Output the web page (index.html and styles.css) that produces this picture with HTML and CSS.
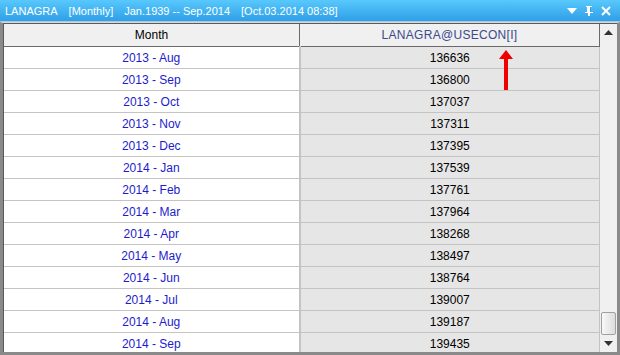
FILE: index.html
```html
<!DOCTYPE html>
<html>

<head>
    <meta charset='UTF-8'>
    <title>LANAGRA</title>
    <link rel="stylesheet" href="styles.css">
</head>

<body>
    <div class='panel'>
        <!-- Title bar -->
        <div class='titlebar'>
            <div class='title-text'>
                <span>LANAGRA</span>
                <span>[Monthly]</span>
                <span>Jan.1939 -- Sep.2014</span>
                <span>[Oct.03.2014 08:38]</span>
            </div>
            <div class='title-buttons'>
                <svg width='12' height='10' viewBox='0 0 12 10'><path d='M1 2h10L6 8z' fill='#fff'/></svg>
                <svg width='12' height='12' viewBox='0 0 12 12'><path d='M3 1h6v1H8v5h2v1H7v3H5V8H2V7h2V2H3z' fill='#fff'/><rect x='7' y='2' width='1' height='5' fill='#2f9fe8'/></svg>
                <svg width='12' height='12' viewBox='0 0 12 12'><path d='M2 2l8 8M10 2l-8 8' stroke='#fff' stroke-width='2'/></svg>
            </div>
        </div>

        <div class='frame'>
            <div class='grid-wrap'>
                <table class='grid'>
                    <thead>
                        <tr>
                            <th class='col-month'>Month</th>
                            <th class='col-value'>LANAGRA@USECON[I]</th>
                        </tr>
                    </thead>
                    <tbody id='rows'></tbody>
                </table>

                <!-- arrow pointing at the series name -->
                <svg class='arrow' width='16' height='42' viewBox='0 0 16 42'>
                    <path d='M8 0L15 9H10V40H6V9H1z' fill='#f20000'/>
                </svg>
            </div>

            <div class='scrollbar'>
                <div class='scroll-btn'>
                    <svg width='9' height='5' viewBox='0 0 9 5'><path d='M4.5 0L9 5H0z' fill='#333'/></svg>
                </div>
                <div class='scroll-track'>
                    <div class='scroll-thumb'></div>
                </div>
                <div class='scroll-btn'>
                    <svg width='9' height='5' viewBox='0 0 9 5'><path d='M0 0h9L4.5 5z' fill='#333'/></svg>
                </div>
            </div>
        </div>
    </div>

    <script>
        const data = [
            ['2013 - Aug', 136636], ['2013 - Sep', 136800], ['2013 - Oct', 137037],
            ['2013 - Nov', 137311], ['2013 - Dec', 137395], ['2014 - Jan', 137539],
            ['2014 - Feb', 137761], ['2014 - Mar', 137964], ['2014 - Apr', 138268],
            ['2014 - May', 138497], ['2014 - Jun', 138764], ['2014 - Jul', 139007],
            ['2014 - Aug', 139187], ['2014 - Sep', 139435]
        ];

        const tbody = document.getElementById('rows');
        data.forEach(([month, value]) => {
            const tr = document.createElement('tr');
            tr.innerHTML = `<td class='col-month'>${month}</td><td class='col-value'>${value}</td>`;
            tbody.appendChild(tr);
        });
    </script>
</body>

</html>
```

FILE: styles.css
```css
body {
    margin: 0;
    font-family: "Liberation Sans", Arial, sans-serif;
    font-size: 12px;
    background: #ffffff;
}

.panel {
    width: 620px;
    height: 355px;
    display: flex;
    flex-direction: column;
    overflow: hidden;
}

.titlebar {
    height: 21px;
    flex-shrink: 0;
    display: flex;
    align-items: center;
    justify-content: space-between;
    padding: 0 8px 0 5px;
    background: linear-gradient(#58c8fc, #2f9fe8);
    border-bottom: 1px solid #a9c9e0;
    color: #ffffff;
    font-size: 11px;
}

.title-text {
    display: flex;
    gap: 11px;
    white-space: nowrap;
}

.title-buttons {
    display: flex;
    align-items: center;
    gap: 5px;
}

.frame {
    flex: 1;
    display: flex;
    min-height: 0;
    border: 3px solid #8a8a8a;
    border-top: 1px solid #d8d8d8;
    background: #ffffff;
}

.grid-wrap {
    position: relative;
    flex: 1;
    overflow: hidden;
    border-left: 1px solid #5a5a5a;
    border-top: 1px solid #5a5a5a;
}

.grid {
    width: 100%;
    border-collapse: collapse;
    table-layout: fixed;
}

.grid th {
    height: 22px;
    padding: 0;
    font-weight: normal;
    background: #f0f0f0;
    border-bottom: 1px solid #6a6a6a;
    border-right: 1px solid #6a6a6a;
}

.grid th.col-month {
    width: 295px;
    color: #000000;
}

.grid th.col-value {
    color: #3a4a8c;
    letter-spacing: 0.3px;
}

.grid td {
    height: 21px;
    padding: 0;
    text-align: center;
    border-bottom: 1px solid #c4c4c4;
}

.grid td.col-month {
    color: #1c1ccc;
    background: #ffffff;
    border-right: 2px solid #c4c4c4;
}

.grid td.col-value {
    color: #000000;
    background: #e6e6e6;
    border-right: 1px solid #c4c4c4;
}

.arrow {
    position: absolute;
    left: 494px;
    top: 26px;
}

.scrollbar {
    width: 17px;
    flex-shrink: 0;
    display: flex;
    flex-direction: column;
    background: #f0f0f0;
    border-top: 1px solid #5a5a5a;
}

.scroll-btn {
    height: 17px;
    display: flex;
    align-items: center;
    justify-content: center;
}

.scroll-track {
    flex: 1;
    display: flex;
    flex-direction: column;
    justify-content: flex-end;
}

.scroll-thumb {
    height: 21px;
    margin: 0 1px;
    border: 1px solid #a0a0a0;
    border-radius: 2px;
    background: linear-gradient(to right, #f8f8f8, #dcdcdc);
}
```
